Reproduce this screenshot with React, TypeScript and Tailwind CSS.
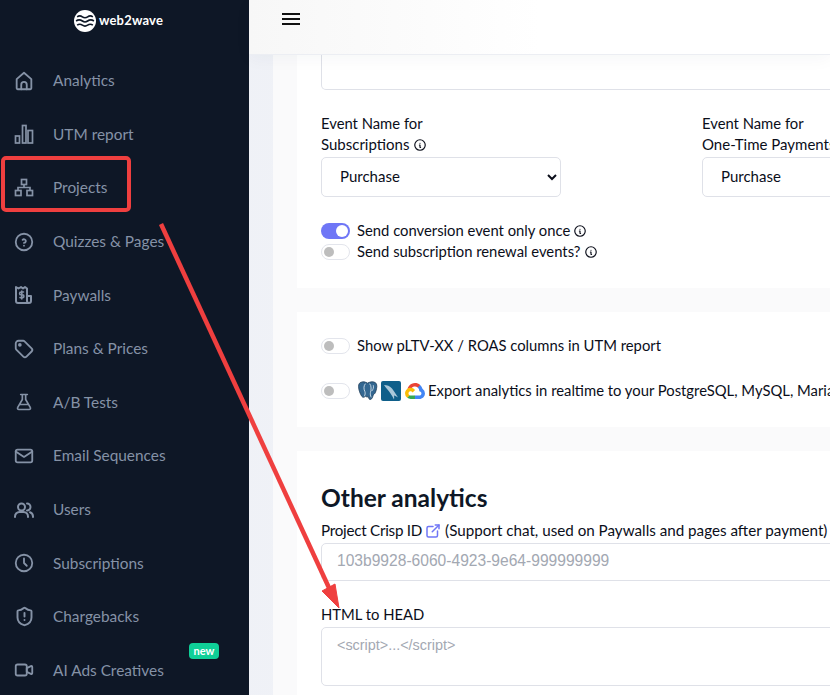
import type { ReactNode } from 'react';
import { TbHelpCircle, TbTag, TbMail, TbClock, TbVideo, TbInfoCircle, TbExternalLink } from 'react-icons/tb';
import { ShieldAlert } from 'lucide-react';

function Glyph({ size = 24, children }: { size?: number; children: ReactNode }) {
  return (
    <svg width={size} height={size} viewBox="0 0 24 24" fill="none" stroke="currentColor" strokeWidth="2" strokeLinecap="round" strokeLinejoin="round">
      {children}
    </svg>
  );
}

function PaywallIcon() {
  return (
    <Glyph>
      <path d="M17 20H6a2 2 0 0 1-2-2V4l2.500 1.500L9 4l2 1.500L13 4l2 1.500V18a2 2 0 0 0 2 2a2 2 0 0 0 2-2v-5h-4" />
      <path d="M11.500 9H9a1.200 1.200 0 0 0 0 2.800h1.500a1.200 1.200 0 0 1 0 2.800H8M9.800 8v8" strokeWidth="1.600" />
    </Glyph>
  );
}

function PostgresLogo() {
  return (
    <svg width="21" height="21" viewBox="0 0 20 20" className="shrink-0">
      <path d="M3 2.500C6 1 8 2 10 3c2-1 5-2 7.500-.5 2 1.500 1.500 5 .5 8-.5 2-1.500 3-2.500 3.500-.5 2-1 4-2.500 4.500-1.500.3-2-1-2-2.500-1 .2-2 .2-3-.5-1 1-2.500 1.500-3.500 0C3 13 1.500 9.500 1.500 6 1.500 4.500 2 3.200 3 2.500Z" fill="#336791" stroke="#22405c" strokeWidth="0.800" />
      <path d="M8 3.500C6 6 6.500 9 7.500 11c.5 1.500.3 3-.5 4.500M12 3.500c2 2 1.500 6 .8 8.500-.3 1.500 0 3 .7 4.500M15.500 5c.5 2 0 4-1.500 5.500" fill="none" stroke="#dfe9f1" strokeWidth="0.800" />
    </svg>
  );
}

function MysqlLogo() {
  return (
    <span className="w-[20px] h-[20px] rounded-[2px] bg-[#0f5f8a] shrink-0 flex">
      <svg width="20" height="20" viewBox="0 0 20 20">
        <path d="M3 4c3 0 6 1 8 3.500 2 2.500 3.500 5 6 9-1.500-1-3-1.800-4-2 .3 1.500.2 2.500 0 4-1-2-2-4-3.500-6C7.500 9.500 5 7 3 4Z" fill="#a9c8da" />
      </svg>
    </span>
  );
}

function GoogleCloudLogo() {
  return (
    <svg width="20" height="16" viewBox="0 0 256 206" className="shrink-0">
      <path d="M170.252 56.819l22.253-22.253 1.483-9.37C153.437-11.677 88.976-7.496 52.42 33.92 42.267 45.423 34.734 59.764 30.717 74.573l7.97-1.123 44.505-7.34 3.436-3.513c19.797-21.742 53.27-24.667 76.128-6.168l7.496.39z" fill="#EA4335" />
      <path d="M224.205 73.918a100.249 100.249 0 00-30.217-48.722l-31.232 31.232a55.515 55.515 0 0120.379 44.037v5.544c15.35 0 27.797 12.445 27.797 27.796 0 15.352-12.446 27.485-27.797 27.485h-55.671l-5.466 5.934v33.34l5.466 5.231h55.67c39.93.311 72.553-31.494 72.864-71.424a72.303 72.303 0 00-31.493-60.453" fill="#4285F4" />
      <path d="M71.87 205.796h55.593V161.29H71.87a27.363 27.363 0 01-11.399-2.498l-7.887 2.42-22.409 22.253-1.952 7.574c12.567 9.489 27.9 14.825 43.647 14.757" fill="#34A853" />
      <path d="M71.87 61.425C31.94 61.664-.237 94.228.001 134.159a72.301 72.301 0 0028.222 56.88l32.248-32.246c-13.99-6.322-20.208-22.786-13.887-36.776 6.32-13.99 22.786-20.208 36.775-13.888a27.796 27.796 0 0113.887 13.888l32.248-32.248A72.224 72.224 0 0071.87 61.425" fill="#FBBC05" />
    </svg>
  );
}

function WaveLogo() {
  return (
    <svg width="22" height="22" viewBox="0 0 21 21">
      <circle cx="10.500" cy="10.500" r="10.500" fill="#fff" />
      <path d="M3 6.500c2-1.500 3-1.500 5 0s3 1.500 5 0 3-1.500 5 0M2 10.500c2-1.500 4-1.500 6 0s3 1.500 5 0 4-1.500 6 0M3 14.500c2-1.500 3-1.500 5 0s3 1.500 5 0 3-1.500 5 0" fill="none" stroke="#0e1726" strokeWidth="1.500" />
    </svg>
  );
}

const navItems: { label: string; icon: ReactNode; badge?: string }[] = [
  {
    label: 'Analytics',
    icon: (
      <Glyph size={22}>
        <path d="M4 20V10l8-7 8 7v10a1 1 0 0 1-1 1H5a1 1 0 0 1-1-1Z" />
        <path d="M9 21v-5a3 3 0 0 1 6 0v5" />
      </Glyph>
    ),
  },
  {
    label: 'UTM report',
    icon: (
      <Glyph>
        <g strokeWidth="1.700" strokeLinecap="butt" strokeLinejoin="miter">
          <rect x="3.500" y="14" width="4" height="7" />
          <rect x="10.500" y="3.500" width="3.500" height="17.500" />
          <rect x="16" y="8.500" width="4.500" height="12.500" />
        </g>
      </Glyph>
    ),
  },
  {
    label: 'Projects',
    icon: (
      <Glyph>
        <g strokeWidth="1.700" strokeLinecap="butt" strokeLinejoin="miter">
          <rect x="9.500" y="3.500" width="5" height="5" />
          <rect x="3.500" y="14.500" width="5.500" height="5" />
          <rect x="15" y="14.500" width="5.500" height="5" />
          <path d="M12 8.500v3M6 14.500v-3h12v3" />
        </g>
      </Glyph>
    ),
  },
  { label: 'Quizzes & Pages', icon: <TbHelpCircle size={22} /> },
  { label: 'Paywalls', icon: <PaywallIcon /> },
  { label: 'Plans & Prices', icon: <TbTag size={22} /> },
  {
    label: 'A/B Tests',
    icon: (
      <Glyph size={20}>
        <path d="M8 3h8M10 3v6L4.500 18.500A1.600 1.600 0 0 0 5.800 21h12.400a1.600 1.600 0 0 0 1.300-2.500L14 9V3M7 15h10" />
      </Glyph>
    ),
  },
  { label: 'Email Sequences', icon: <TbMail size={22} /> },
  {
    label: 'Users',
    icon: (
      <Glyph>
        <circle cx="9.500" cy="9" r="3.500" />
        <path d="M3 19v-.5A4.500 4.500 0 0 1 7.500 14h4a4.500 4.500 0 0 1 4.500 4.500v.5M15 5.500a3.500 3.500 0 0 1 0 7M18 14.200a4.500 4.500 0 0 1 3 4.300v.5" />
      </Glyph>
    ),
  },
  { label: 'Subscriptions', icon: <TbClock size={22} /> },
  { label: 'Chargebacks', icon: <ShieldAlert size={21} strokeWidth={2.200} /> },
  { label: 'AI Ads Creatives', icon: <TbVideo size={22} />, badge: 'new' },
];

function Sidebar() {
  return (
    <aside className="w-[249px] shrink-0 bg-[#0e1726] flex flex-col">
      <div className="h-[54px] pb-[12px] pr-[12px] flex items-center justify-center gap-[3px] shrink-0">
        <WaveLogo />
        <span className="text-white text-[13px] font-bold tracking-[0.2px]">web2wave</span>
      </div>
      {navItems.map((item) => (
        <div key={item.label} className="relative h-[53.600px] shrink-0 flex items-center text-[#8592a6]">
          <span className="w-[53px] pl-[12px] flex items-center">
            <span className="w-[24px] flex justify-center">{item.icon}</span>
          </span>
          <span className="text-[15.400px] whitespace-nowrap">{item.label}</span>
          {item.badge && (
            <span className="absolute left-[189px] top-[-1px] h-[16px] w-[30px] rounded-[4px] bg-[#0fcf97] text-white text-[11px] font-bold leading-[16px] text-center">
              {item.badge}
            </span>
          )}
        </div>
      ))}
    </aside>
  );
}

function Toggle({ on = false }: { on?: boolean }) {
  return on ? (
    <span className="w-[29px] h-[16px] rounded-full bg-[#6f76f6] flex items-center justify-end pr-[2px] shrink-0">
      <span className="w-[12px] h-[12px] rounded-full bg-white" />
    </span>
  ) : (
    <span className="w-[29px] h-[16px] rounded-full bg-white border border-[#e3e5ec] flex items-center pl-[2px] shrink-0">
      <span className="w-[10px] h-[10px] rounded-full bg-[#bdbdbd]" />
    </span>
  );
}

function SelectField({ first, second, info }: { first: string; second: string; info?: boolean }) {
  return (
    <div className="w-[240px] shrink-0">
      <div className="text-[14.800px] leading-[21px] text-[#0b0e1a] whitespace-nowrap">
        <div>{first}</div>
        <div className="flex items-center gap-[4px] text-[15px]">
          {second}
          {info && <TbInfoCircle size={14} />}
        </div>
      </div>
      <select className="mt-[2px] w-full h-[40px] pl-[14px] pr-[6px] pb-[2px] rounded-[5px] border border-[#dfe1e8] bg-white text-[15px] text-[#0b0e1a]">
        <option>Purchase</option>
      </select>
    </div>
  );
}

function Hamburger() {
  return (
    <svg width="18" height="12" viewBox="0 0 18 12" fill="none" stroke="#111" strokeWidth="2">
      <path d="M0 1h18M0 6h18M0 11h18" />
    </svg>
  );
}

export default function App() {
  return (
    <div className="relative w-[830px] h-[695px] overflow-hidden flex bg-gradient-to-r from-[#eef0f6] to-[#f2f4f8]" style={{ fontFamily: 'Lato, "Noto Sans", sans-serif' }}>
      <Sidebar />
      <main className="flex-1 min-w-0 flex flex-col">
        <header className="relative z-10 h-[55px] shrink-0 bg-gradient-to-r from-[#f7f7f7] via-white to-white border-b border-[#eceef3] shadow-[0_4px_16px_rgba(30,40,70,0.04)] pl-[33px] pt-[13px]">
          <Hamburger />
        </header>
        <div className="ml-[24px] flex-1 bg-[#fafafb] pl-[24px] flex flex-col gap-[24px] w-[800px]">
          <section className="h-[233px] shrink-0 bg-white px-[24px]">
            <div className="h-[35px] rounded-b-[5px] border border-t-0 border-[#dfe1e8]" />
            <div className="mt-[23px] flex gap-[141px]">
              <SelectField first="Event Name for" second="Subscriptions" info />
              <SelectField first="Event Name for" second="One-Time Payments" />
            </div>
            <div className="mt-[23px] flex items-center gap-[7px] h-[21px] text-[14.800px] text-[#0b0e1a]">
              <Toggle on />
              <span className="flex items-center gap-[3px]">
                Send conversion event only once
                <TbInfoCircle size={14} />
              </span>
            </div>
            <div className="flex items-center gap-[7px] h-[21px] text-[14.800px] text-[#0b0e1a]">
              <Toggle />
              <span className="flex items-center gap-[3px]">
                Send subscription renewal events?
                <TbInfoCircle size={14} />
              </span>
            </div>
          </section>
          <section className="h-[115px] shrink-0 bg-white px-[24px] pt-[23px]">
            <div className="flex items-center gap-[7px] h-[21px] text-[14.800px] text-[#0b0e1a]">
              <Toggle />
              Show pLTV-XX / ROAS columns in UTM report
            </div>
            <div className="mt-[24px] flex items-center gap-[7px] h-[21px] text-[14.800px] text-[#0b0e1a] whitespace-nowrap">
              <Toggle />
              <span className="flex items-center gap-[3px]">
                <PostgresLogo />
                <MysqlLogo />
                <span className="ml-[1px] flex"><GoogleCloudLogo /></span>
              </span>
              <span className="-ml-[4px]">Export analytics in realtime to your PostgreSQL, MySQL, MariaDB or BigQuery</span>
            </div>
          </section>
          <section className="flex-1 bg-white px-[24px] pt-[32px]">
            <h2 className="text-[24.500px] leading-[30px] font-bold text-[#0e1726]">Other analytics</h2>
            <div className="mt-[7px] flex items-center h-[21px] text-[15.200px] text-[#0b0e1a] whitespace-nowrap">
              <span className="tracking-[-0.250px]">Project Crisp ID</span>
              <TbExternalLink size={18} className="ml-[2px] mr-[3px] text-[#6f76f6]" />
              (Support chat, used on Paywalls and pages after payment)
            </div>
            <input
              readOnly
              placeholder="103b9928-6060-4923-9e64-999999999"
              className="mt-[2px] w-full h-[38px] px-[15px] pb-[3px] rounded-[5px] border border-[#dfe1e8] bg-white text-[15.600px] placeholder-[#a3a8b2] outline-none"
              style={{ fontFamily: '"Liberation Sans", sans-serif' }}
            />
            <div className="mt-[22px] h-[21px] text-[14.800px] text-[#0b0e1a]">HTML to HEAD</div>
            <textarea
              readOnly
              placeholder="<script>...</script>"
              className="mt-[3px] block w-full h-[59px] px-[15px] py-[7px] rounded-[5px] border border-[#dfe1e8] bg-white text-[14.400px] placeholder-[#a3a8b2] outline-none resize-none"
              style={{ fontFamily: '"Liberation Sans", sans-serif' }}
            />
          </section>
        </div>
      </main>

      {/* screenshot annotation: red box and arrow */}
      <div className="absolute left-[1px] top-[156px] w-[130px] h-[56px] rounded-[5px] border-[4px] border-[#ef3f3f] pointer-events-none" />
      <svg className="absolute left-0 top-0 pointer-events-none" width="830" height="695" viewBox="0 0 830 695" fill="none">
        <path d="M161 224L330 590" stroke="#ef3f3f" strokeWidth="4.500" />
        <path d="M339 608L322 591L335 584Z" fill="#ef3f3f" stroke="#ef3f3f" strokeWidth="1" />
      </svg>
    </div>
  );
}
